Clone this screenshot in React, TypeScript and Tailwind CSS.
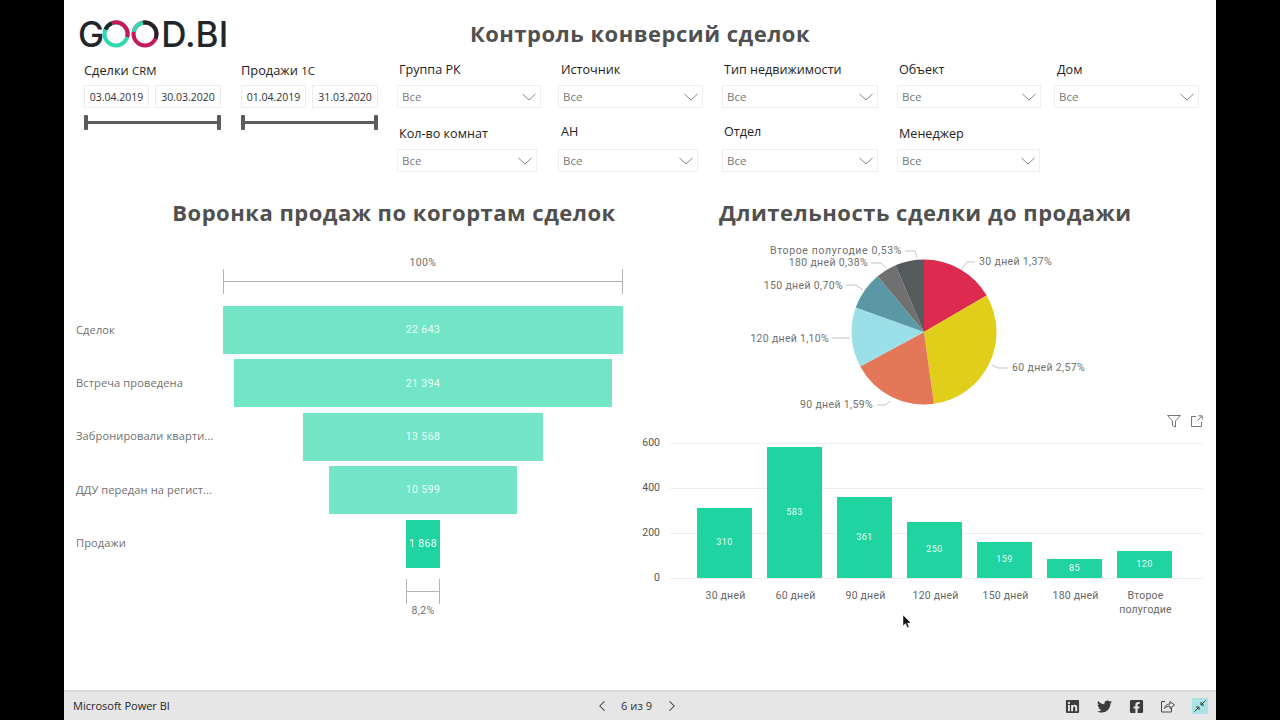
import React from 'react';
import { FaLinkedin, FaTwitter, FaFacebookSquare } from 'react-icons/fa';
import { ChevronLeft, ChevronRight } from 'lucide-react';

const funnelRows = [
  { label: 'Сделок', value: '22 643', width: 400, color: 'bg-[#72e5c6]' },
  { label: 'Встреча проведена', value: '21 394', width: 378, color: 'bg-[#72e5c6]' },
  { label: 'Забронировали кварти...', value: '13 568', width: 240, color: 'bg-[#72e5c6]' },
  { label: 'ДДУ передан на регист...', value: '10 599', width: 188, color: 'bg-[#72e5c6]' },
  { label: 'Продажи', value: '1 868', width: 34, color: 'bg-[#1fd4a0]' },
];

const durationBars = [
  { label: '30 дней', value: 310 },
  { label: '60 дней', value: 583 },
  { label: '90 дней', value: 361 },
  { label: '120 дней', value: 250 },
  { label: '150 дней', value: 159 },
  { label: '180 дней', value: 85 },
  { label: 'Второе полугодие', value: 120 },
];

const pieSlices = [
  { share: 1.37, color: '#dd2b50' },
  { share: 2.57, color: '#e0ce1b' },
  { share: 1.59, color: '#e47757' },
  { share: 1.1, color: '#9bdfe9' },
  { share: 0.7, color: '#5b98a6' },
  { share: 0.38, color: '#707070' },
  { share: 0.53, color: '#535b5c' },
];

const pieLabels = [
  { text: 'Второе полугодие 0,53%', x: 902, y: 254, anchor: 'end', line: 'M905 251 H915 L917 258', spacing: 0.62 },
  { text: '180 дней 0,38%', x: 868, y: 266, anchor: 'end', line: 'M871 263 H881 L886 268', spacing: 0.35 },
  { text: '150 дней 0,70%', x: 843, y: 289, anchor: 'end', line: 'M846 285 H856 L863 290', spacing: 0.35 },
  { text: '120 дней 1,10%', x: 829, y: 342, anchor: 'end', line: 'M832 338 H850', spacing: 0.3 },
  { text: '90 дней 1,59%', x: 873, y: 408, anchor: 'end', line: 'M877 405 H885 L890 401', spacing: 0.35 },
  { text: '60 дней 2,57%', x: 1012, y: 371, anchor: 'start', line: 'M992 365 L998 368 H1008', spacing: 0.35 },
  { text: '30 дней 1,37%', x: 979, y: 265, anchor: 'start', line: 'M962 269 L967 262 H975', spacing: 0.35 },
];

function arcPath(cx: number, cy: number, r: number, from: number, to: number) {
  const pt = (a: number) => [cx + r * Math.sin(a), cy - r * Math.cos(a)];
  const [x1, y1] = pt(from);
  const [x2, y2] = pt(to);
  return `M${cx} ${cy} L${x1} ${y1} A${r} ${r} 0 ${to - from > Math.PI ? 1 : 0} 1 ${x2} ${y2} Z`;
}

const Logo = () => (
  <div className="flex items-center w-[160px] h-[30px] text-[#22262b] font-['Inter',sans-serif] font-medium text-[35px] leading-none">
    <span className="-mr-[2px]">G</span>
    <svg width="59" height="30" viewBox="0 0 59 30" className="shrink-0">
      {/* первое кольцо */}
      <circle cx="14" cy="15" r="11.5" fill="none" stroke="#2ed9ad" strokeWidth="4" />
      <path d="M3.5 10.5 A11.5 11.5 0 0 1 10 4.2" fill="none" stroke="#22262b" strokeWidth="4" />
      <path d="M10 4.2 A11.5 11.5 0 0 1 25.2 18" fill="none" stroke="#c5185f" strokeWidth="4" />
      {/* второе кольцо */}
      <circle cx="43" cy="15" r="11.5" fill="none" stroke="#c5185f" strokeWidth="4" />
      <path d="M31.7 13 A11.5 11.5 0 0 1 41 3.7" fill="none" stroke="#2ed9ad" strokeWidth="4" />
      <path d="M41 3.7 A11.5 11.5 0 0 1 54.5 15 A11.5 11.5 0 0 1 53.5 19.5" fill="none" stroke="#22262b" strokeWidth="4" />
    </svg>
    <span className="tracking-[0.05px]">D.BI</span>
  </div>
);

const DateSlicer = ({ label, note, from, to, className }: { label: string; note: string; from: string; to: string; className: string }) => (
  <div className={`flex flex-col w-[137px] ${className}`}>
    <div className="text-[12.8px] leading-[20px] text-[#222]">
      {label} <span className="text-[11.4px]">{note}</span>
    </div>
    <div className="flex justify-between mt-[4px]">
      <div className="w-[65px] h-[23px] pt-[2px] border border-[#ececec] flex items-center justify-center text-[10.5px] text-[#333]">{from}</div>
      <div className="w-[66px] h-[23px] pt-[2px] border border-[#ececec] flex items-center justify-center text-[10.5px] text-[#333]">{to}</div>
    </div>
    <div className="flex items-center mt-[7px] h-[15px]">
      <div className="w-[4px] h-[15px] bg-[#5c5c5c] rounded-[1px]" />
      <div className="flex-1 h-[3px] bg-[#5c5c5c]" />
      <div className="w-[4px] h-[15px] bg-[#5c5c5c] rounded-[1px]" />
    </div>
  </div>
);

const Dropdown = ({ label, className, labelClass = '' }: { label: string; className: string; labelClass?: string }) => (
  <div className={`flex flex-col ${className}`}>
    <div className={`text-[12.6px] leading-[20px] text-[#222] pl-[2px] ${labelClass}`}>{label}</div>
    <div className="mt-[5px] h-[23px] border border-[#efefef] flex items-center justify-between pl-[4px] pr-[3px] text-[11.5px] text-[#777]">
      <span>Все</span>
      <svg width="16" height="8" viewBox="0 0 16 8" fill="none" stroke="#888" strokeWidth="1">
        <path d="M1.5 1 L8 7 L14.5 1" />
      </svg>
    </div>
  </div>
);

const Pie = () => {
  const total = pieSlices.reduce((s, p) => s + p.share, 0);
  let angle = 0;
  return (
    <svg width="1152" height="180" viewBox="64 240 1152 180" className="absolute left-0 top-[240px] pointer-events-none">
      {pieSlices.map((s) => {
        const from = angle;
        angle += (s.share / total) * Math.PI * 2;
        return <path key={s.color} d={arcPath(924, 332, 72.5, from, angle)} fill={s.color} />;
      })}
      {pieLabels.map((l) => (
        <g key={l.text}>
          <path d={l.line} fill="none" stroke="#c4c4c4" strokeWidth="1" />
          <text x={l.x} y={l.y} textAnchor={l.anchor as 'start' | 'end'} fontSize="10.5" letterSpacing={l.spacing} fill="#6f6f6f" fontFamily="Roboto, sans-serif">{l.text}</text>
        </g>
      ))}
    </svg>
  );
};

const Funnel = () => (
  <div className="flex flex-col w-[559px] pl-[12px]">
    <div className="ml-[147px] w-[400px] flex flex-col items-center pt-[16px]">
      <div className="text-[10.5px] leading-[14px] tracking-[0.35px] text-[#6f6f6f] font-['Roboto',sans-serif]">100%</div>
      <div className="-mt-[1px] w-full h-[25px] flex items-center border-x border-[#b4b4b4]">
        <div className="w-full h-px bg-[#b4b4b4]" />
      </div>
    </div>
    <div className="mt-[12px] flex flex-col gap-[5.4px]">
      {funnelRows.map((row) => (
        <div key={row.label} className="flex items-center h-[48px]">
          <div className="w-[147px] text-[11.1px] text-[#6f6f6f] tracking-[0.1px] whitespace-nowrap font-['Open_Sans',sans-serif]">{row.label}</div>
          <div className="w-[400px] flex justify-center">
            <div
              className={`h-[48px] flex items-center justify-center text-[10.5px] tracking-[0.4px] text-[#eafff8] whitespace-nowrap font-['Roboto',sans-serif] ${row.color}`}
              style={{ width: row.width }}
            >
              {row.value}
            </div>
          </div>
        </div>
      ))}
    </div>
    <div className="ml-[147px] w-[400px] flex flex-col items-center mt-[11px]">
      <div className="w-[34px] h-[25px] flex items-center border-x border-[#b4b4b4]">
        <div className="w-full h-px bg-[#b4b4b4]" />
      </div>
      <div className="text-[10.5px] leading-[14px] tracking-[0.35px] text-[#6f6f6f] font-['Roboto',sans-serif]">8,2%</div>
    </div>
  </div>
);

const DurationChart = () => (
  <div className="flex flex-col w-[564px] relative">
    <div className="flex justify-end items-center gap-[10px] pr-0 h-[14px]">
      <svg width="14" height="13" viewBox="0 0 14 13" fill="none" stroke="#777" strokeWidth="1">
        <path d="M0.5 0.5 H13.5 L8.5 6 V12 L5.5 10.5 V6 Z" />
      </svg>
      <svg width="12" height="12" viewBox="0 0 12 12" fill="none" stroke="#777" strokeWidth="1">
        <path d="M5 1.5 H0.5 V11.5 H10.5 V7 M6.5 5.5 L11 1 M7.5 0.8 H11.2 V4.5" />
      </svg>
    </div>
    <div className="mt-[15px] h-[141px] relative">
      {[600, 400, 200, 0].map((tick) => (
        <div key={tick} className="h-[45px] last:h-[6px] flex items-start">
          <div className="w-[21px] text-[10.5px] leading-[12px] -mt-[6px] text-right text-[#555] font-['Roboto',sans-serif]">{tick}</div>
          <div className="flex-1 h-px ml-[10px] bg-[#eeeeee]" />
        </div>
      ))}
      <div className="absolute left-[58px] right-[30px] top-0 h-[135px] flex items-end gap-[15px]">
        {durationBars.map((bar) => (
          <div
            key={bar.label}
            className="w-[55px] flex items-center justify-center text-[9px] tracking-[0.5px] text-[#eafff8] bg-[#1fd4a0] font-['Roboto',sans-serif]"
            style={{ height: bar.value * 0.225 }}
          >
            {bar.value}
          </div>
        ))}
      </div>
    </div>
    <div className="flex gap-[15px] pl-[59px] mt-[5px]">
      {durationBars.map((bar) => (
        <div key={bar.label} className="w-[55px] text-center text-[10.5px] leading-[13.5px] tracking-[0.2px] text-[#666] font-['Roboto',sans-serif]">
          {bar.label}
        </div>
      ))}
    </div>
  </div>
);

const headingClass = "text-center text-[22px] leading-[28px] font-bold tracking-[0.5px] text-[#505050] whitespace-nowrap";

export default function App() {
  return (
    <div className="w-[1280px] h-[720px] bg-black flex justify-center overflow-hidden font-['Open_Sans',sans-serif]">
      <div className="w-[1152px] h-[720px] flex flex-col">
        <div className="relative h-[690px] bg-white flex flex-col">
          {/* шапка */}
          <div className="relative h-[60px] pt-[19px] pl-[14px]">
            <Logo />
            <div className={`absolute left-0 right-0 top-[19px] ${headingClass}`}>
              Контроль конверсий сделок
            </div>
          </div>

          {/* фильтры */}
          <div className="flex items-start h-[117px]">
            <DateSlicer label="Сделки" note="CRM" from="03.04.2019" to="30.03.2020" className="ml-[20px]" />
            <DateSlicer label="Продажи" note="1C" from="01.04.2019" to="31.03.2020" className="ml-[20px]" />
            <div className="ml-[19px] flex flex-col gap-[16px] w-[144px]">
              <Dropdown label="Группа РК" className="w-[144px]" />
              <Dropdown label="Кол-во комнат" className="w-[140px]" />
            </div>
            <div className="ml-[17px] flex flex-col gap-[16px] w-[145px]">
              <Dropdown label="Источник" className="w-[145px]" labelClass="pl-[3px]" />
              <Dropdown label="АН" className="w-[140px]" labelClass="pl-[3px] -mt-[2px] mb-[2px]" />
            </div>
            <div className="ml-[19px] flex flex-col gap-[16px] w-[156px]">
              <Dropdown label="Тип недвижимости" className="w-[156px]" />
              <Dropdown label="Отдел" className="w-[156px]" labelClass="-mt-[2px] mb-[2px]" />
            </div>
            <div className="ml-[19px] flex flex-col gap-[16px] w-[144px]">
              <Dropdown label="Объект" className="w-[144px]" />
              <Dropdown label="Менеджер" className="w-[143px]" />
            </div>
            <div className="ml-[13px] w-[145px]">
              <Dropdown label="Дом" className="w-[145px]" labelClass="pl-[3px]" />
            </div>
          </div>

          {/* заголовки разделов */}
          <div className="flex h-[42px] pt-[21px] box-content">
            <div className={`w-[660px] ${headingClass}`}>
              Воронка продаж по когортам сделок
            </div>
            <div className={`w-[410px] ml-[-5px] ${headingClass}`}>
              Длительность сделки до продажи
            </div>
          </div>

          {/* графики */}
          <div className="flex items-start">
            <Funnel />
            <div className="ml-[16px] mt-[174px]">
              <DurationChart />
            </div>
          </div>

          <Pie />

          {/* курсор */}
          <svg width="10" height="15" viewBox="0 0 10 15" className="absolute left-[838px] top-[614px]">
            <path d="M1 1 V12 L3.5 9.5 L5.5 14 L7 13 L5.5 9 H9 Z" fill="#111" stroke="#fff" strokeWidth="0.5" />
          </svg>
        </div>

        {/* нижняя панель */}
        <div className="h-[30px] bg-[#e6e6e6] border-t-2 border-[#dadada] flex items-center justify-between text-[#333] relative">
          <div className="pl-[9px] text-[11px] text-[#252525] font-['Open_Sans',sans-serif]">Microsoft Power BI</div>
          <div className="absolute left-[529px] top-0 h-full flex items-center gap-[10px] text-[11.2px] text-[#333]">
            <ChevronLeft size={18} strokeWidth={1.4} />
            <span>6 из 9</span>
            <ChevronRight size={18} strokeWidth={1.4} className="ml-[1px]" />
          </div>
          <div className="flex items-center gap-[17px] pr-[8px] text-[#3c3c3c]">
            <FaLinkedin size={15} />
            <FaTwitter size={15} />
            <FaFacebookSquare size={15} />
            <svg width="14" height="13" viewBox="0 0 14 13" fill="none" stroke="#444" strokeWidth="1">
              <path d="M4 1.5 H0.5 V12 H10.5 V8 M3.5 8.5 C4 5 7 4 9 4 V1.5 L13.5 5 L9 8.5 V6.2 C7 6 5 6.5 3.5 8.5 Z" />
            </svg>
            <div className="w-[16px] h-[16px] bg-[#a9e3e6] flex items-center justify-center">
              <svg width="12" height="12" viewBox="0 0 12 12" fill="none" stroke="#333" strokeWidth="1">
                <path d="M0.5 11.5 L5 7 M2 7 H5 V10 M11.5 0.5 L7 5 M7 2 V5 H10" />
              </svg>
            </div>
          </div>
        </div>
      </div>
    </div>
  );
}
